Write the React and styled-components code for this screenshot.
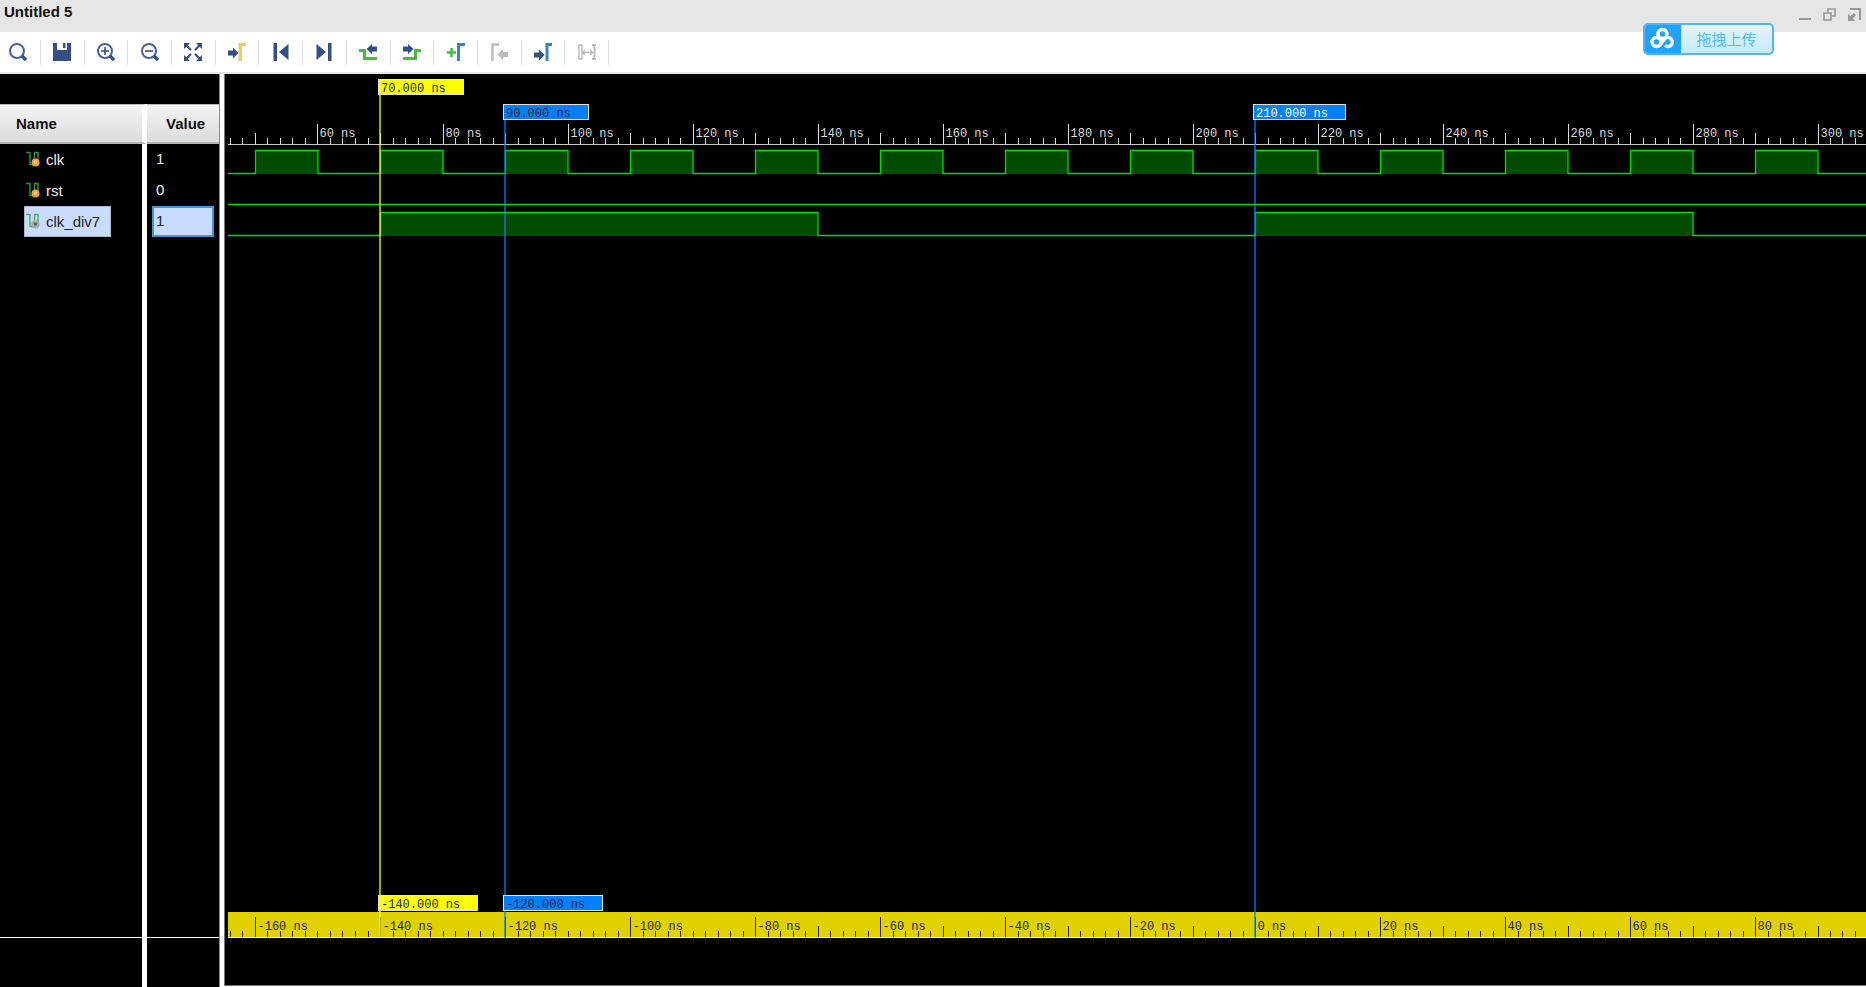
import React from 'react';
import styled, { createGlobalStyle } from 'styled-components';

const PX_PER_NS = 25 / 4;
const START_NS = 45.6;
const END_NS = 700;
const LAST_TICK_NS = 306;
const REFERENCE_NS = 210;

const toX = ns => (ns - START_NS) * PX_PER_NS;

const GlobalStyle = createGlobalStyle`
    *, *::before {
        box-sizing: border-box;
    }
    body {
        margin: 0;
        font-family: "Liberation Sans", Arial, sans-serif;
        font-size: 15px;
        background: #fff;
    }
    button {
        margin: 0;
        padding: 0;
        border: 0;
        background: none;
        font: inherit;
    }
`;

const Page = styled.div`
    position: relative;
    display: flex;
    flex-direction: column;
    height: 100vh;
    overflow: hidden;
`;

const TitleBar = styled.header`
    display: flex;
    justify-content: space-between;
    height: 32px;
    padding: 3px 4px 0;
    background: #e6e6e6;
`;

const Title = styled.h1`
    margin: 0;
    font-size: 15px;
    line-height: 18px;
    color: #111;
`;

const WindowButtons = styled.div`
    display: flex;
    gap: 11px;
    padding-top: 4px;
    button {
        width: 14px;
        height: 16px;
    }
    svg {
        display: block;
    }
`;

const Toolbar = styled.div`
    display: flex;
    align-items: center;
    width: 609px;
    height: 40px;
`;

const ToolButton = styled.button`
    display: flex;
    flex: 1;
    align-items: center;
    justify-content: center;
    height: 25px;
    border-right: 1px solid #dcdcdc;
    &:first-child {
        flex: 0 0 41px;
        padding-right: 4px;
    }
`;

const Body = styled.main`
    display: flex;
    flex: 1;
    min-height: 0;
    border-top: 2px solid #e6e6e6;
`;

const SignalPanel = styled.section`
    display: flex;
    flex-direction: column;
    width: 220px;
    background: #000;
    border-right: 1px solid #8a8a8a;
`;

const SignalTable = styled.table`
    width: 100%;
    margin-top: 30px;
    table-layout: fixed;
    border-spacing: 0;
    th, td {
        padding: 0;
        text-align: left;
    }
    th:first-child, td:first-child {
        width: 147px;
        border-right: 5px solid #fff;
    }
`;

const HeadCell = styled.th`
    height: 40px;
    border-top: 1px solid #bbb;
    border-bottom: 2px solid #b4b4b4;
    background: linear-gradient(#f4f4f4, #dcdcdc);
    color: #111;
    line-height: 16px;
    span {
        padding-left: ${props => props.$indent};
    }
`;

const NameCell = styled.td`
    height: 31px;
    padding-left: 24px !important;
`;

const ValueCell = styled.td`
    height: 31px;
    padding: 0 5px !important;
`;

const NameBox = styled.div`
    display: inline-flex;
    align-items: center;
    gap: 6px;
    height: 31px;
    padding: 0 10px 1px 1px;
    vertical-align: top;
    border: 1px solid ${props => (props.$selected ? '#a9b4cc' : 'transparent')};
    background: ${props => (props.$selected ? '#c9dcff' : 'none')};
    color: ${props => (props.$selected ? '#223' : '#f0f0f0')};
`;

const ValueBox = styled.div`
    height: 31px;
    padding-left: 2px;
    line-height: 26px;
    border: 2px solid ${props => (props.$selected ? '#4796cf' : 'transparent')};
    background: ${props => (props.$selected ? '#c9dcff' : 'none')};
    color: ${props => (props.$selected ? '#223' : '#f0f0f0')};
`;

const PanelFill = styled.div`
    flex: 1;
    width: 147px;
    border-right: 5px solid #fff;
`;

const PanelFoot = styled.div`
    height: 50px;
    border-top: 1px solid #fff;
    &::before {
        content: '';
        display: block;
        width: 147px;
        height: 49px;
        border-right: 5px solid #fff;
    }
`;

const WavePanel = styled.section`
    flex: 1;
    min-width: 0;
    margin: 0 0 1px 4px;
    padding-left: 3px;
    background: #000;
    border-left: 1px solid #777;
    border-bottom: 1px solid #777;
`;

const Plot = styled.div`
    position: relative;
    display: flex;
    flex-direction: column;
    height: 100%;
    overflow: hidden;
    svg {
        display: block;
        flex: none;
        width: 100%;
    }
`;

const PlotSpace = styled.div`
    flex: 1;
`;

const PlotFoot = styled.div`
    height: 47px;
`;

const RulerText = styled.text`
    font-family: "Liberation Mono", monospace;
    font-size: 12px;
    fill: ${props => props.$color};
`;

const CursorLine = styled.div`
    position: absolute;
    top: ${props => props.$top};
    bottom: 47px;
    width: 2px;
    background: ${props => props.$line};
`;

const Flag = styled.span`
    position: absolute;
    left: -1px;
    ${props => (props.$bottom ? 'bottom: 27px;' : 'top: 0;')}
    height: 16px;
    padding: 0 17px 0 2px;
    border: 1px solid #dde3ea;
    background: ${props => props.$fill};
    color: ${props => props.$text};
    font-family: "Liberation Mono", monospace;
    font-size: 12px;
    line-height: 18px;
    white-space: nowrap;
`;

const UploadButton = styled.button`
    position: absolute;
    top: 23px;
    right: 92px;
    display: flex;
    width: 131px;
    height: 32px;
    overflow: hidden;
    border: 2px solid #56b3fa !important;
    border-radius: 5px;
    background: linear-gradient(#e4f6ff, #c3eaff) !important;
    color: #55bbfa;
    font-family: "Noto Sans CJK SC", sans-serif !important;
    line-height: 28px !important;
    svg {
        flex: none;
        background: #22a2ff;
    }
    span {
        flex: 1;
    }
`;

const navy = '#344f86';
const green = '#49b83c';
const blue = '#3b84b5';
const gray = '#bcbcbc';

const Lens = ({ children }) => (
    <g fill="none" stroke={navy}>
        <circle cx="8" cy="8" r="7" strokeWidth="2" stroke="#4a6295" />
        <path d="M13 13L17 17" strokeWidth="3.4" />
        {children}
    </g>
);

const arrowRight = 'M0 6.500H5V3.500L10.500 9L5 14.500V11.500H0Z';

const tools = [
    { label: 'Find', icon: <Lens /> },
    { label: 'Save', icon: <path fill={navy} d="M0 0H4V7H14V0H18V18H0ZM10 0H12.500V5H10Z" /> },
    { label: 'Zoom In', icon: <Lens><path d="M4 8H12M8 4V12" strokeWidth="1.600" /></Lens> },
    { label: 'Zoom Out', icon: <Lens><path d="M4 8H12" strokeWidth="1.600" /></Lens> },
    {
        label: 'Zoom Fit',
        icon: (
            <g fill={navy} stroke={navy}>
                <path stroke="none" d="M0 0H6L0 6ZM18 0V6L12 0ZM0 18V12L6 18ZM18 18H12L18 12Z" />
                <path strokeWidth="2" d="M2 2L7 7M16 2L11 7M2 16L7 11M16 16L11 11" />
            </g>
        ),
    },
    {
        label: 'Go to Cursor',
        icon: (
            <g>
                <path fill={navy} d={arrowRight} transform="translate(0 1)" />
                <path fill="#e6cd6c" d="M10.500 0H18V3H14V18H10.500Z" />
            </g>
        ),
    },
    { label: 'Go to Start', icon: <path fill={navy} d="M1.500 0H5V18H1.500ZM16.500 1V17L7 9Z" /> },
    { label: 'Go to End', icon: <path fill={navy} d="M1.500 1L11 9L1.500 17ZM13 0H16.500V18H13Z" /> },
    {
        label: 'Previous Transition',
        icon: (
            <g>
                <path fill="none" stroke={green} strokeWidth="3" d="M0 7.500H5.500V15.500H18" />
                <path fill={navy} d="M18 3.500H13V1L7.500 6L13 11V8.500H18Z" />
            </g>
        ),
    },
    {
        label: 'Next Transition',
        icon: (
            <g>
                <path fill="none" stroke={green} strokeWidth="3" d="M0 15.500H12.500V7.500H18" />
                <path fill={navy} d="M0 3.500H5V1L10.500 6L5 11V8.500H0Z" />
            </g>
        ),
    },
    {
        label: 'Add Marker',
        icon: (
            <g fill="none" strokeWidth="3">
                <path stroke={green} strokeWidth="2.600" d="M0 9.500H9M4.500 5V14" />
                <path stroke={blue} d="M11.500 18V1.500H18" />
            </g>
        ),
    },
    {
        label: 'Previous Marker',
        icon: (
            <g>
                <path fill="none" stroke={gray} strokeWidth="2.400" d="M2.500 18V1.500H9" />
                <path fill={gray} d="M18 9H13V6L7.500 11.500L13 17V14H18Z" />
            </g>
        ),
    },
    {
        label: 'Next Marker',
        icon: (
            <g>
                <path fill={navy} d={arrowRight} transform="translate(0 3)" />
                <path fill="none" stroke={blue} strokeWidth="3" d="M13 18V1.500H18" />
            </g>
        ),
    },
    {
        label: 'Swap Cursors',
        icon: (
            <g fill="none" stroke={gray}>
                <path d="M1 2H4V16H1ZM4 9.500H14M7 7L4.500 9.500L7 12M12 7L14.500 9.500L12 12" strokeWidth="1.400" />
                <path d="M16.500 1V17M14 2H18M14 16H18" strokeWidth="2" />
            </g>
        ),
    },
];

// edges: times where the value toggles, starting from 0
const clkEdges = Array.from({ length: 60 }, (_, i) => 50 + i * 10);

const signals = [
    { name: 'clk', value: 1, edges: clkEdges },
    { name: 'rst', value: 0, edges: [] },
    { name: 'clk_div7', value: 1, edges: [70, 140, 210, 280], selected: true },
];

const cursors = [
    { ns: 70, top: '5px', fill: '#ffff00', line: 'rgba(255, 255, 0, .65)', text: '#222' },
    { ns: 90, top: '30px', fill: '#0080ff', line: 'rgba(0, 128, 255, .65)', text: '#04244a' },
    { ns: 210, top: '30px', fill: '#0080ff', line: 'rgba(0, 128, 255, .65)', text: '#fff' },
];

const SignalIcon = ({ selected }) => (
    <svg width="14" height="16" viewBox="0 0 14 16" aria-hidden="true">
        <path fill="none" stroke={selected ? '#4fae68' : '#2f8d45'} strokeWidth="1.500" d="M0 1.500H4V13.500H7M8.500 10V1.500H12V10" />
        <circle cx="9.500" cy="11.500" r="4" fill={selected ? '#a8a8a8' : '#f2a03c'} />
        <circle cx="9.500" cy="11" r="1.800" fill={selected ? '#666' : '#ffc67a'} />
    </svg>
);

const Ruler = ({ height, from, to, offset, color, fill, base, midFrom }) => {
    const ticks = [];
    for (let t = from; t <= to; t += 2) {
        ticks.push(t);
    }
    const bottom = height - 1;
    return (
        <svg height={height}>
            <rect width="100%" height={height} fill={fill} />
            {
                ticks.map(t => {
                    const x = Math.floor(toX(t + offset)) + 0.5;
                    const major = t % 20 === 0;
                    const size = major ? 20 : t % 10 === 0 && t >= midFrom ? 11 : 6;
                    return (
                        <g key={t}>
                            <line x1={x} x2={x} y1={bottom - size} y2={bottom} stroke={color} strokeWidth="1" />
                            {major && <RulerText x={x + 2} y={bottom - 7} $color={color}>{t} ns</RulerText>}
                        </g>
                    );
                })
            }
            <rect y={height - 1} width="100%" height="1" fill={base} />
        </svg>
    );
};

const Wave = ({ edges }) => {
    let high = false;
    let line = 'M0 28.500';
    const blocks = [];
    edges.forEach((ns, i) => {
        const x = toX(ns);
        high = !high;
        line += `H${x}V${high ? 5.5 : 28.5}`;
        if (high) {
            blocks.push({ x, width: toX(edges[i + 1]) - x });
        }
    });
    line += `H${toX(END_NS)}`;
    return (
        <svg height="31">
            {blocks.map(b => <rect key={b.x} x={b.x} y="5" width={b.width} height="24" fill="#004b00" />)}
            <path d={line} fill="none" stroke="#00dc00" strokeWidth="1.300" />
        </svg>
    );
};

const Cursor = ({ ns, top, fill, line, text }) => (
    <CursorLine $top={top} $line={line} style={{ left: Math.floor(toX(ns)) - 1 }}>
        <Flag $fill={fill} $text={text}>{ns.toFixed(3)} ns</Flag>
        {ns !== REFERENCE_NS && <Flag $bottom $fill={fill} $text={text}>{(ns - REFERENCE_NS).toFixed(3)} ns</Flag>}
    </CursorLine>
);

const App = () => (
    <Page>
        <GlobalStyle />
        <TitleBar>
            <Title>Untitled 5</Title>
            <WindowButtons>
                <button type="button" aria-label="Minimize">
                    <svg width="14" height="16"><path d="M1 12H13" stroke="#999" strokeWidth="2" /></svg>
                </button>
                <button type="button" aria-label="Restore">
                    <svg width="14" height="16">
                        <path d="M1 6H8V13H1ZM5 6V2H12V9H8" fill="none" stroke="#999" strokeWidth="1.600" />
                    </svg>
                </button>
                <button type="button" aria-label="Float">
                    <svg width="14" height="16">
                        <path d="M2 2H12V13" fill="none" stroke="#999" strokeWidth="2" />
                        <path d="M0 14V7L2.500 9L6 6L8 8L5 11.500L7 14Z" fill="#999" />
                    </svg>
                </button>
            </WindowButtons>
        </TitleBar>
        <Toolbar role="toolbar">
            {
                tools.map(tool =>
                    <ToolButton key={tool.label} type="button" aria-label={tool.label}>
                        <svg width="18" height="18" viewBox="0 0 18 18">{tool.icon}</svg>
                    </ToolButton>
                )
            }
        </Toolbar>
        <Body>
            <SignalPanel>
                <SignalTable>
                    <thead>
                        <tr>
                            <HeadCell $indent="16px"><span>Name</span></HeadCell>
                            <HeadCell $indent="19px"><span>Value</span></HeadCell>
                        </tr>
                    </thead>
                    <tbody>
                    {
                        signals.map(signal =>
                            <tr key={signal.name}>
                                <NameCell>
                                    <NameBox $selected={signal.selected}>
                                        <SignalIcon selected={signal.selected} />
                                        {signal.name}
                                    </NameBox>
                                </NameCell>
                                <ValueCell>
                                    <ValueBox $selected={signal.selected}>{signal.value}</ValueBox>
                                </ValueCell>
                            </tr>
                        )
                    }
                    </tbody>
                </SignalTable>
                <PanelFill />
                <PanelFoot />
            </SignalPanel>
            <WavePanel>
                <Plot>
                    <Ruler height={71} from={46} to={LAST_TICK_NS} offset={0} color="#dcdcdc" fill="#000" base="#c8c8c8" midFrom={0} />
                    {signals.map(signal => <Wave key={signal.name} edges={signal.edges} />)}
                    <PlotSpace />
                    <Ruler height={26} from={-164} to={LAST_TICK_NS - REFERENCE_NS} offset={REFERENCE_NS} color="#2a2700" fill="#e0d000" base="#fff" midFrom={-70} />
                    {cursors.map(cursor => <Cursor key={cursor.ns} {...cursor} />)}
                    <PlotFoot />
                </Plot>
            </WavePanel>
        </Body>
        <UploadButton type="button">
            <svg width="36" height="28" viewBox="0 0 36 28">
                <g fill="none" stroke="#fff" strokeWidth="3.400">
                    <circle cx="17.500" cy="9" r="4.500" />
                    <circle cx="11.500" cy="17" r="4.500" />
                    <path d="M20 20.500A4.500 4.500 0 1 0 19.500 14L14.500 20.500" />
                </g>
            </svg>
            <span>拖拽上传</span>
        </UploadButton>
    </Page>
);

export default App;
